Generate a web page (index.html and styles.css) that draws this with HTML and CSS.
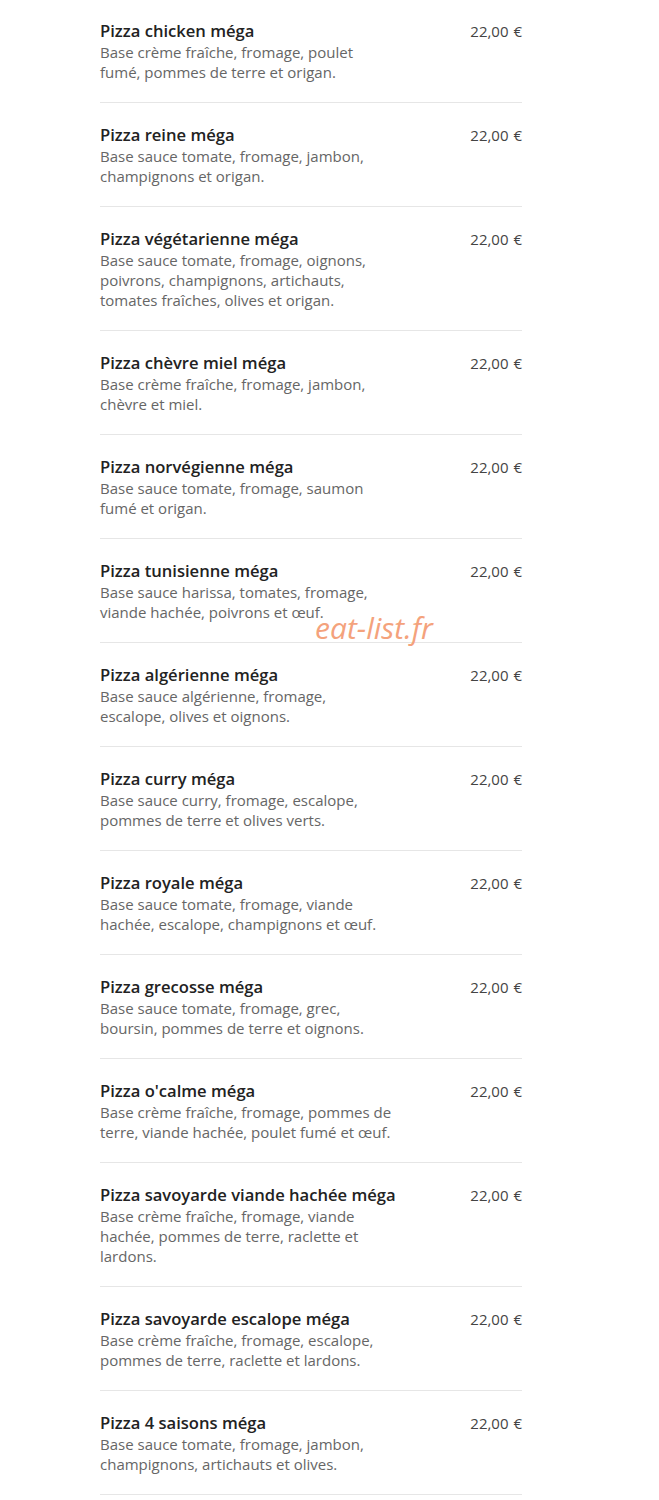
FILE: index.html
```html
<!DOCTYPE html>
<html lang="fr">
<head>
  <meta charset="UTF-8">
  <meta name="viewport" content="width=device-width, initial-scale=1.0">
  <title>Pizzas méga</title>
  <link rel="stylesheet" href="styles.css">
</head>
<body>
  <div class="menu">
    <div class="item">
      <div class="info">
        <h3>Pizza chicken méga</h3>
        <p>Base crème fraîche, fromage, poulet fumé, pommes de terre et origan.</p>
      </div>
      <span class="price">22,00 €</span>
    </div>
    <div class="item">
      <div class="info">
        <h3>Pizza reine méga</h3>
        <p>Base sauce tomate, fromage, jambon, champignons et origan.</p>
      </div>
      <span class="price">22,00 €</span>
    </div>
    <div class="item">
      <div class="info">
        <h3>Pizza végétarienne méga</h3>
        <p>Base sauce tomate, fromage, oignons, poivrons, champignons, artichauts, tomates fraîches, olives et origan.</p>
      </div>
      <span class="price">22,00 €</span>
    </div>
    <div class="item">
      <div class="info">
        <h3>Pizza chèvre miel méga</h3>
        <p>Base crème fraîche, fromage, jambon, chèvre et miel.</p>
      </div>
      <span class="price">22,00 €</span>
    </div>
    <div class="item">
      <div class="info">
        <h3>Pizza norvégienne méga</h3>
        <p>Base sauce tomate, fromage, saumon fumé et origan.</p>
      </div>
      <span class="price">22,00 €</span>
    </div>
    <div class="item">
      <div class="info">
        <h3>Pizza tunisienne méga</h3>
        <p>Base sauce harissa, tomates, fromage, viande hachée, poivrons et œuf.</p>
      </div>
      <span class="price">22,00 €</span>
      <span class="watermark">eat-list.fr</span>
    </div>
    <div class="item">
      <div class="info">
        <h3>Pizza algérienne méga</h3>
        <p>Base sauce algérienne, fromage, escalope, olives et oignons.</p>
      </div>
      <span class="price">22,00 €</span>
    </div>
    <div class="item">
      <div class="info">
        <h3>Pizza curry méga</h3>
        <p>Base sauce curry, fromage, escalope, pommes de terre et olives verts.</p>
      </div>
      <span class="price">22,00 €</span>
    </div>
    <div class="item">
      <div class="info">
        <h3>Pizza royale méga</h3>
        <p>Base sauce tomate, fromage, viande hachée, escalope, champignons et œuf.</p>
      </div>
      <span class="price">22,00 €</span>
    </div>
    <div class="item">
      <div class="info">
        <h3>Pizza grecosse méga</h3>
        <p>Base sauce tomate, fromage, grec, boursin, pommes de terre et oignons.</p>
      </div>
      <span class="price">22,00 €</span>
    </div>
    <div class="item">
      <div class="info">
        <h3>Pizza o'calme méga</h3>
        <p>Base crème fraîche, fromage, pommes de terre, viande hachée, poulet fumé et œuf.</p>
      </div>
      <span class="price">22,00 €</span>
    </div>
    <div class="item">
      <div class="info">
        <h3>Pizza savoyarde viande hachée méga</h3>
        <p>Base crème fraîche, fromage, viande hachée, pommes de terre, raclette et lardons.</p>
      </div>
      <span class="price">22,00 €</span>
    </div>
    <div class="item">
      <div class="info">
        <h3>Pizza savoyarde escalope méga</h3>
        <p>Base crème fraîche, fromage, escalope, pommes de terre, raclette et lardons.</p>
      </div>
      <span class="price">22,00 €</span>
    </div>
    <div class="item">
      <div class="info">
        <h3>Pizza 4 saisons méga</h3>
        <p>Base sauce tomate, fromage, jambon, champignons, artichauts et olives.</p>
      </div>
      <span class="price">22,00 €</span>
    </div>
  </div>
</body>
</html>
```

FILE: styles.css
```css
* {
  margin: 0;
  padding: 0;
  box-sizing: border-box;
}

body {
  background: #ffffff;
  font-family: 'Open Sans', 'Noto Sans', sans-serif;
  color: #222;
}

.menu {
  width: 422px;
  margin: -1px 0 0 100px;
}

.item {
  position: relative;
  display: flex;
  justify-content: space-between;
  align-items: flex-start;
  padding: 21px 0 20px;
  border-bottom: 1px solid #e6e6e6;
}

.info h3 {
  font-size: 16.6px;
  font-weight: 600;
  line-height: 22px;
  color: #222;
}

.info p {
  max-width: 294px;
  font-size: 15px;
  line-height: 20px;
  color: #666;
}

.price {
  font-size: 15px;
  line-height: 22px;
  word-spacing: 1px;
  color: #444;
  white-space: nowrap;
}

.watermark {
  position: absolute;
  left: 215px;
  top: 71px;
  font-size: 30px;
  font-style: italic;
  line-height: 36px;
  color: #f4a27c;
}
```
